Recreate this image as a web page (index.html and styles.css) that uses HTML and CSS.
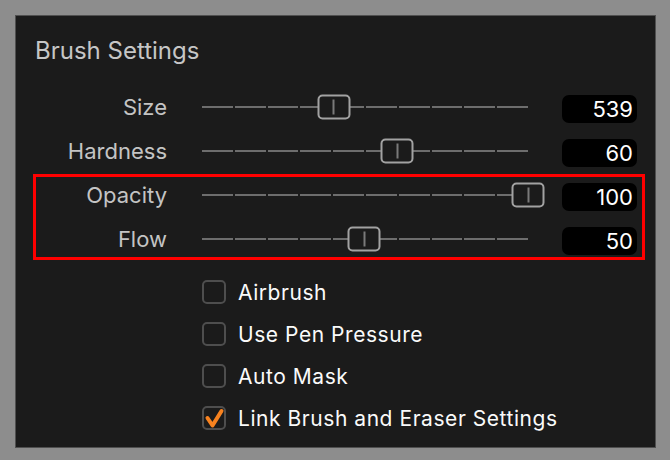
FILE: index.html
```html
<!DOCTYPE html>
<html lang="en">
<head>
    <meta charset="UTF-8">
    <meta name="viewport" content="width=device-width, initial-scale=1.0">
    <title>Brush Settings</title>
    <link rel="stylesheet" href="styles.css">
</head>
<body>
    <div class="panel">
        <h2 class="title">Brush Settings</h2>

        <div class="sliders">
            <div class="row">
                <span class="label">Size</span>
                <div class="track"><span class="thumb" style="left: 40.2%"></span></div>
                <span class="value">539</span>
            </div>
            <div class="row">
                <span class="label">Hardness</span>
                <div class="track"><span class="thumb" style="left: 59.5%"></span></div>
                <span class="value">60</span>
            </div>

            <!-- highlighted pair -->
            <div class="highlight">
                <div class="row">
                    <span class="label">Opacity</span>
                    <div class="track"><span class="thumb" style="left: 99.4%"></span></div>
                    <span class="value">100</span>
                </div>
                <div class="row">
                    <span class="label">Flow</span>
                    <div class="track"><span class="thumb" style="left: 49.4%"></span></div>
                    <span class="value">50</span>
                </div>
            </div>
        </div>

        <ul class="options">
            <li><span class="check"></span>Airbrush</li>
            <li><span class="check"></span>Use Pen Pressure</li>
            <li><span class="check"></span>Auto Mask</li>
            <li>
                <span class="check">
                    <svg viewBox="0 0 24 24" width="24" height="24">
                        <path d="M5.5 12 L10.5 19.5 L19.5 5" fill="none" stroke="#f7821f" stroke-width="4" stroke-linecap="round" stroke-linejoin="round"/>
                    </svg>
                </span>Link Brush and Eraser Settings
            </li>
        </ul>
    </div>
</body>
</html>
```

FILE: styles.css
```css
body {
    margin: 0;
    padding: 15px;
    background-color: #8d8d8d;
    font-family: Inter, "Noto Sans", sans-serif;
}
.panel {
    width: 639px;
    height: 431px;
    background: #1b1b1b;
    border: 1px solid #505050;
}
.title {
    margin: 20px 0 0 19px;
    font-size: 24px;
    line-height: 30px;
    font-weight: 400;
    color: #c6c6c6;
}
.sliders {
    margin-top: 23px;
    display: flex;
    flex-direction: column;
    gap: 8px;
}
.row {
    --label-w: 151px;
    display: flex;
    align-items: center;
    height: 36px;
}
.label {
    flex: none;
    width: var(--label-w);
    text-align: right;
    font-size: 22px;
    line-height: 36px;
    color: #c4c4c4;
}
.track {
    position: relative;
    flex: none;
    width: 328px;
    height: 2px;
    margin-left: 35px;
    background: repeating-linear-gradient(90deg, #6d6d6d 0 30.8px, transparent 30.8px 32.8px);
}
.thumb {
    position: absolute;
    top: 50%;
    width: 29px;
    height: 21px;
    border: 2px solid #a2a2a2;
    border-radius: 5px;
    background: #1b1b1b;
    transform: translate(-50%, -50%);
}
.thumb::after {
    content: "";
    position: absolute;
    left: 13.5px;
    top: 3px;
    width: 2px;
    height: 15px;
    background: #7a7a7a;
}
.value {
    flex: none;
    width: 75px;
    height: 28px;
    margin: 4px 0 0 32px;
    box-sizing: border-box;
    padding-right: 4px;
    border-radius: 7px;
    background: #000;
    color: #fff;
    text-align: right;
    font-size: 22px;
    line-height: 28px;
}
.highlight {
    margin: -3px 10px 0 17px;
    border: 3px solid #ff0000;
    display: flex;
    flex-direction: column;
    gap: 8px;
}
.highlight .row {
    --label-w: 131px;
}
.options {
    list-style: none;
    margin: 20px 0 0;
    padding: 0 0 0 186px;
    display: flex;
    flex-direction: column;
    gap: 18px;
}
.options li {
    display: flex;
    align-items: center;
    height: 24px;
    font-size: 21px;
    letter-spacing: 0.55px;
    color: #fafafa;
}
.check {
    flex: none;
    width: 24px;
    height: 24px;
    box-sizing: border-box;
    margin-right: 12px;
    border: 2px solid #4e4e4e;
    border-radius: 5px;
    position: relative;
}
.check svg {
    position: absolute;
    left: -2px;
    top: -2px;
}
```
